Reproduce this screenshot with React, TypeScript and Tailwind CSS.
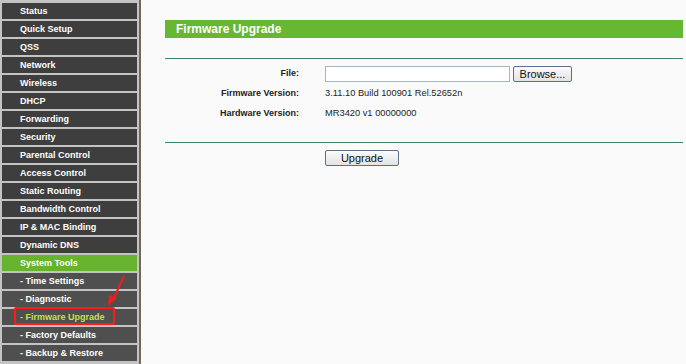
import React from 'react'

const MENU: { label: string; kind: 'main' | 'active' | 'sub' }[] = [
  { label: 'Status', kind: 'main' },
  { label: 'Quick Setup', kind: 'main' },
  { label: 'QSS', kind: 'main' },
  { label: 'Network', kind: 'main' },
  { label: 'Wireless', kind: 'main' },
  { label: 'DHCP', kind: 'main' },
  { label: 'Forwarding', kind: 'main' },
  { label: 'Security', kind: 'main' },
  { label: 'Parental Control', kind: 'main' },
  { label: 'Access Control', kind: 'main' },
  { label: 'Static Routing', kind: 'main' },
  { label: 'Bandwidth Control', kind: 'main' },
  { label: 'IP & MAC Binding', kind: 'main' },
  { label: 'Dynamic DNS', kind: 'main' },
  { label: 'System Tools', kind: 'active' },
  { label: '- Time Settings', kind: 'sub' },
  { label: '- Diagnostic', kind: 'sub' },
  { label: '- Firmware Upgrade', kind: 'sub' },
  { label: '- Factory Defaults', kind: 'sub' },
  { label: '- Backup & Restore', kind: 'sub' },
]

function Sidebar() {
  return (
    <div className="flex h-full shrink-0">
      <div className="w-[139px] h-full bg-[#c4c4c4] pl-[2px] pr-[2px] pt-[3px] flex flex-col gap-[2px]">
        {MENU.map((item) => {
          const current = item.label === '- Firmware Upgrade'
          const bg =
            item.kind === 'active'
              ? 'bg-[#66b32e]'
              : item.kind === 'sub'
                ? 'bg-[#4f4f4f]'
                : 'bg-[#3e3e3e]'
          return (
            <div key={item.label} className={`relative h-[16px] shrink-0 flex items-center pl-[18px] ${bg}`}>
              <span
                className={`text-[9px] font-bold leading-none whitespace-nowrap ${current ? 'text-[#c6e04a]' : 'text-white'}`}
              >
                {item.label}
              </span>
              {current && (
                <>
                  {/* red highlight + arrow */}
                  <div className="absolute left-[12px] top-[-2px] w-[101px] h-[18px] border-2 border-[#ff1a1a] rounded-[2px]" />
                  <svg className="absolute left-[100px] top-[-35px]" width="30" height="36" viewBox="0 0 30 36">
                    <line x1="22" y1="2" x2="11" y2="26" stroke="#f21c1c" strokeWidth="2" />
                    <polygon points="6,32 7,21 15,24" fill="#f21c1c" />
                  </svg>
                </>
              )}
            </div>
          )
        })}
      </div>
      <div className="w-[2px] h-full bg-[#6e6a56]" />
    </div>
  )
}

function Row({ label, children }: { label: string; children: React.ReactNode }) {
  return (
    <div className="flex items-center h-[20px]">
      <div className="w-[134px] text-right text-[9px] font-bold text-[#222]">{label}</div>
      <div className="pl-[26px] flex items-center text-[9.3px] text-[#222]">{children}</div>
    </div>
  )
}

export default function App() {
  return (
    <div
      className="w-[686px] h-[364px] flex bg-[#fafafa] overflow-hidden"
      style={{ fontFamily: '"Liberation Sans", Arial, sans-serif' }}
    >
      <Sidebar />
      <div className="flex-1 pl-[24px] pr-[3px] pt-[20px]">
        <div className="h-[18px] bg-[#66b832] flex items-center pl-[11px]">
          <span className="text-white text-[12px] font-bold">Firmware Upgrade</span>
        </div>
        <div className="mt-[20px] h-[1px] bg-[#3b8a5e]" />
        <div className="pt-[5px] pb-[18px]">
          <Row label="File:">
            <div className="w-[185px] h-[16px] bg-white border border-[#a5b6c8]" />
            <button className="ml-[3px] w-[59px] h-[16px] border border-[#5a6f8a] rounded-[2px] bg-gradient-to-b from-[#fbfbfb] to-[#e3e3e3] text-[11px] text-[#111] leading-none">
              Browse...
            </button>
          </Row>
          <Row label="Firmware Version:">3.11.10 Build 100901 Rel.52652n</Row>
          <Row label="Hardware Version:">MR3420 v1 00000000</Row>
        </div>
        <div className="h-[1px] bg-[#3b8a5e]" />
        <div className="flex pt-[7px] pl-[160px]">
          <button className="w-[74px] h-[16px] border border-[#5a6f8a] rounded-[2px] bg-gradient-to-b from-[#fbfbfb] to-[#e3e3e3] text-[11px] text-[#111] leading-none">
            Upgrade
          </button>
        </div>
      </div>
    </div>
  )
}
